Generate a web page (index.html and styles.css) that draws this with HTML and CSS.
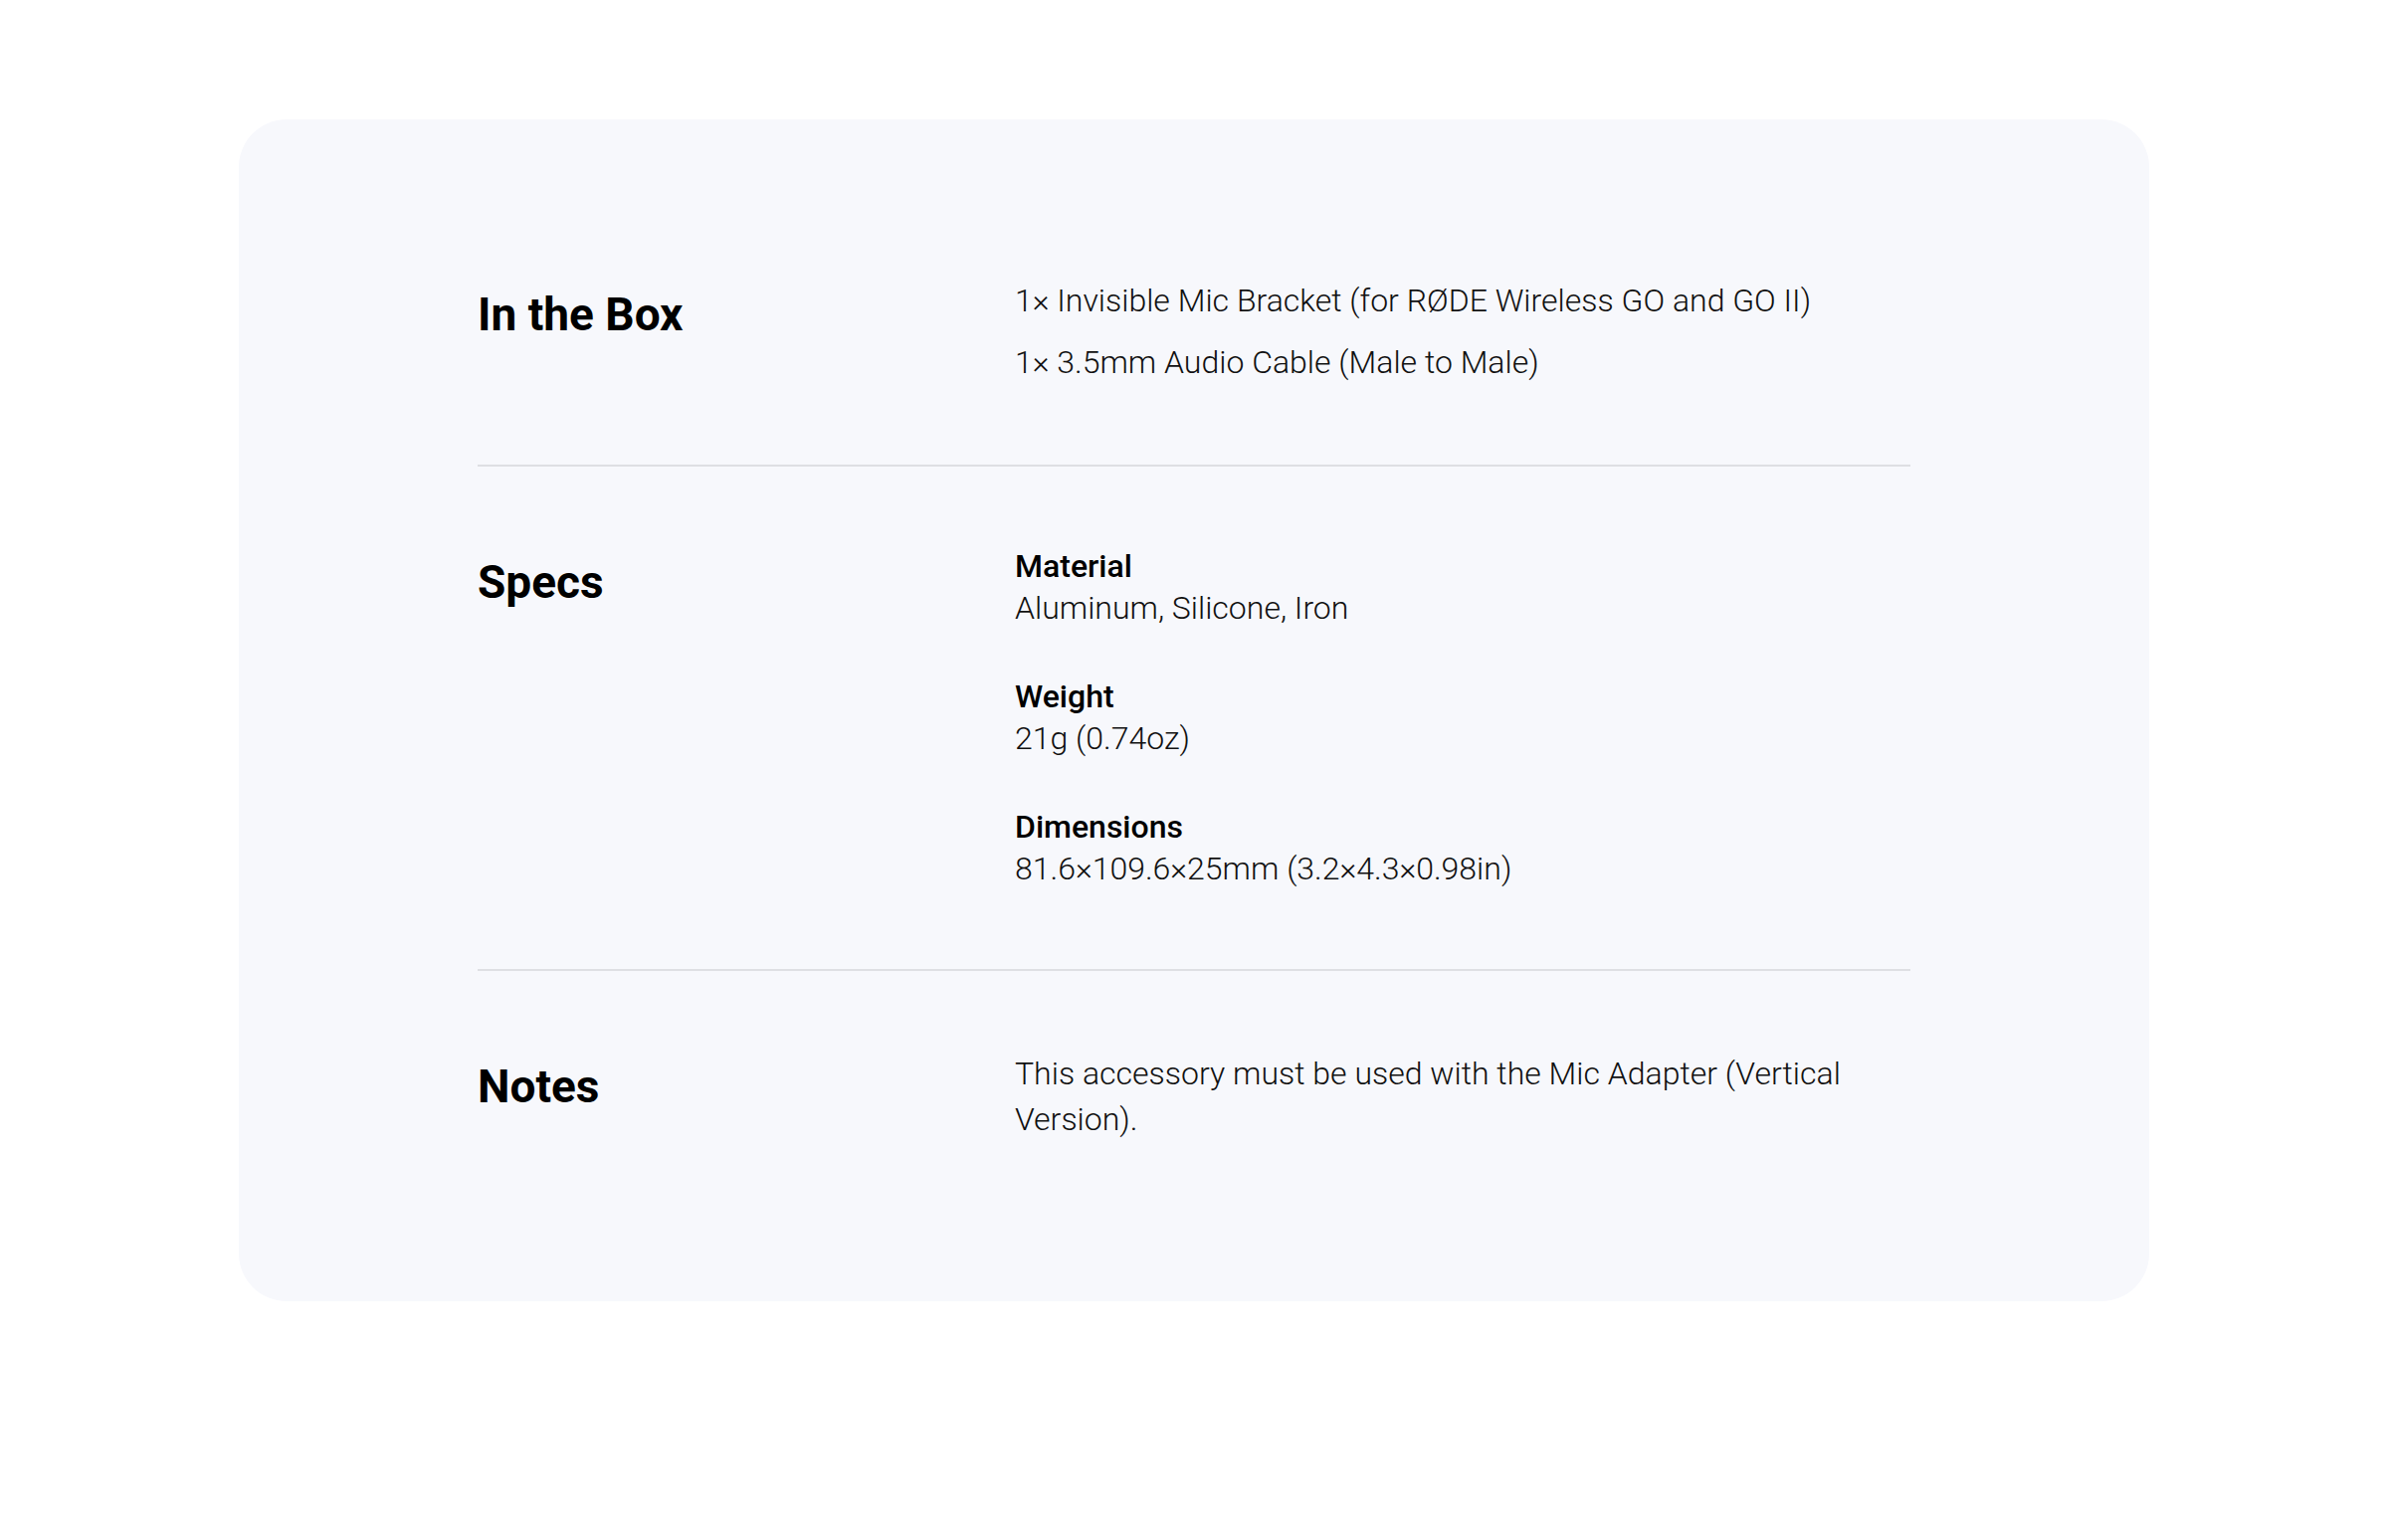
FILE: index.html
```html
<!DOCTYPE html>
<html lang="en">
<head>
    <meta charset="UTF-8">
    <meta name="viewport" content="width=device-width, initial-scale=1.0">
    <title>Invisible Mic Bracket - Specs</title>
    <link rel="stylesheet" href="styles.css">
</head>
<body>
    <div class="page">
        <div class="spec-card">
            <div class="spec-list">
                <!-- In the box -->
                <div class="spec-row">
                    <h2 class="spec-title">In the Box</h2>
                    <ul class="box-items">
                        <li>1× Invisible Mic Bracket (for RØDE Wireless GO and GO II)</li>
                        <li>1× 3.5mm Audio Cable (Male to Male)</li>
                    </ul>
                </div>

                <!-- Specs -->
                <div class="spec-row">
                    <h2 class="spec-title">Specs</h2>
                    <div class="spec-groups">
                        <div class="spec-group">
                            <div class="spec-label">Material</div>
                            <div class="spec-value">Aluminum, Silicone, Iron</div>
                        </div>
                        <div class="spec-group">
                            <div class="spec-label">Weight</div>
                            <div class="spec-value">21g (0.74oz)</div>
                        </div>
                        <div class="spec-group">
                            <div class="spec-label">Dimensions</div>
                            <div class="spec-value">81.6×109.6×25mm (3.2×4.3×0.98in)</div>
                        </div>
                    </div>
                </div>

                <!-- Notes -->
                <div class="spec-row">
                    <h2 class="spec-title">Notes</h2>
                    <p class="notes-text">This accessory must be used with the Mic Adapter (Vertical Version).</p>
                </div>
            </div>
        </div>
    </div>
</body>
</html>
```

FILE: styles.css
```css
html, body {
    margin: 0;
    background: #ffffff;
    font-family: Roboto, "Liberation Sans", sans-serif;
    color: #111111;
}

.page {
    padding: 120px 240px;
}

.spec-card {
    background-color: #f7f8fc;
    border-radius: 48px;
    padding: 80px 240px;
}

.spec-list {
    display: flex;
    flex-direction: column;
}

.spec-row {
    display: grid;
    grid-template-columns: 540px 1fr;
    padding: 80px 0;
    border-bottom: 2px solid #dedfe3;
}

.spec-row:last-child {
    border-bottom: none;
}

.spec-title {
    margin: 0;
    font-size: 46px;
    line-height: 72px;
    font-weight: 700;
    color: #000000;
}

/* In the box */
.box-items {
    list-style: none;
    margin: 0;
    padding: 0;
    display: flex;
    flex-direction: column;
    gap: 17px;
    font-size: 32px;
    line-height: 45px;
    font-weight: 300;
}

/* Specs */
.spec-groups {
    display: flex;
    flex-direction: column;
    gap: 48px;
    font-size: 32px;
    line-height: 41.5px;
}

.spec-label {
    font-weight: 500;
    color: #000000;
}

.spec-value {
    font-weight: 300;
}

/* Notes */
.notes-text {
    margin: 0;
    font-size: 32px;
    line-height: 46px;
    font-weight: 300;
}
```
